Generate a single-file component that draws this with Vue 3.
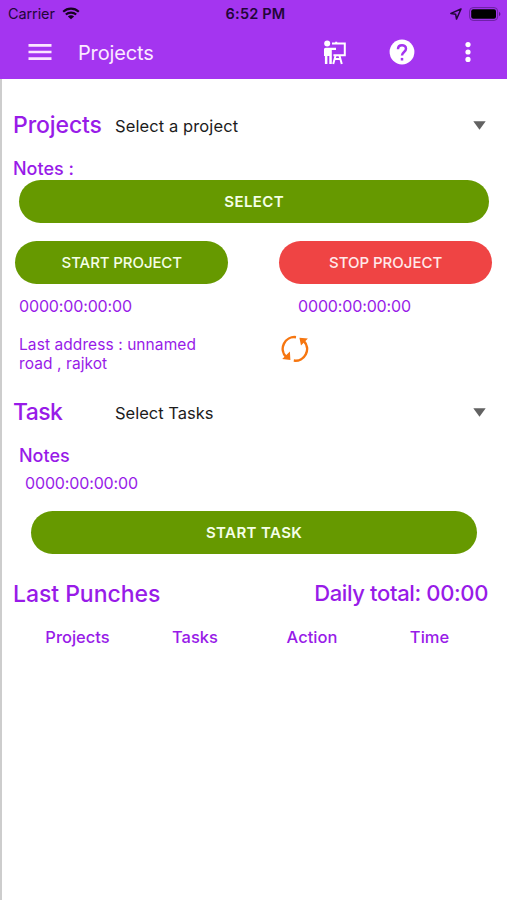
<script setup>
const columns = ['Projects', 'Tasks', 'Action', 'Time']
</script>

<template>
  <div class="screen">
    <header class="header">
      <div class="status">
        <div class="status-left">
          <span class="carrier">Carrier</span>
          <svg class="wifi" viewBox="0 0 18 12">
            <path d="M1.2 4.3C5.6.1 12.4.1 16.8 4.3" />
            <path d="M3.8 7.1c2.9-2.7 7.5-2.7 10.4 0" />
            <path class="solid" d="M9 11.8 5.9 8.9c1.8-1.5 4.4-1.5 6.2 0z" />
          </svg>
        </div>
        <span class="clock">6:52 PM</span>
        <div class="status-right">
          <svg class="location" viewBox="0 0 12 12"><path d="M11 1 .9 5.4l4.8.9.8 4.8z" /></svg>
          <svg class="battery" viewBox="0 0 32 14">
            <rect class="shell" x=".6" y=".6" width="28" height="12.8" rx="3.5" />
            <rect class="charge" x="2.2" y="2.2" width="24.8" height="9.6" rx="2" />
            <path class="tip" d="M30 4.8c1.9.8 1.9 3.6 0 4.4z" />
          </svg>
        </div>
      </div>
      <nav class="nav">
        <svg class="menu" viewBox="0 0 24 18"><path d="M.5 2.3h23M.5 9h23M.5 15.7h23" /></svg>
        <h1 class="title">Projects</h1>
        <svg class="trainer" viewBox="0 0 24 25">
          <circle cx="4.2" cy="3.6" r="3" />
          <path d="M2.8 7.8h10.2v2.2H8.8v14.1H6.3v-8H4.4v8H1.9v-8H1V9.6c0-1.1.7-1.8 1.8-1.8z" />
          <path class="line" d="M9 3.6h12.8v11.6H10.4M13.2 3.6V1.8M12.6 15.5l-2.4 8.4M16.4 15.5l2.4 8.4M12 18.9h5.2" />
        </svg>
        <svg class="help" viewBox="0 0 26 26">
          <circle cx="13" cy="13" r="12.4" />
          <path d="M9 10.2c0-5.4 8-5.1 8-.5 0 3.2-4 3.3-4 6.8" />
          <path d="M13 18.9v2.6" />
        </svg>
        <svg class="more" viewBox="0 0 6 22">
          <circle cx="3" cy="3.6" r="2.6" /><circle cx="3" cy="11" r="2.6" /><circle cx="3" cy="18.4" r="2.6" />
        </svg>
      </nav>
    </header>

    <main class="content">
      <div class="picker">
        <h2 class="heading projects">Projects</h2>
        <span class="choice project-choice">Select a project</span>
        <svg class="caret" viewBox="0 0 13 9"><path d="M.3.2h12.4L6.5 8.8z" /></svg>
      </div>
      <div class="notes project-notes">Notes :</div>
      <button class="button select">SELECT</button>
      <div class="actions">
        <button class="button start">START PROJECT</button>
        <button class="button stop">STOP PROJECT</button>
      </div>
      <div class="timers">
        <span class="timer">0000:00:00:00</span>
        <span class="timer">0000:00:00:00</span>
      </div>
      <div class="location-row">
        <p class="address">Last address : unnamed<br>road , rajkot</p>
        <svg class="refresh" viewBox="0 0 28 28">
          <path class="arc" d="M15 2.2A11.7 11.7 0 0 0 5.3 22.2M12.8 25.6A11.7 11.7 0 0 0 22.7 5.8" />
          <path d="M1.2 24 8.9 16.5 9.4 25zM18.4 2.8l8.5.8-6.9 7z" />
        </svg>
      </div>

      <div class="picker task-picker">
        <h2 class="heading task">Task</h2>
        <span class="choice task-choice">Select Tasks</span>
        <svg class="caret" viewBox="0 0 13 9"><path d="M.3.2h12.4L6.5 8.8z" /></svg>
      </div>
      <div class="notes task-notes">Notes</div>
      <span class="timer task-timer">0000:00:00:00</span>
      <button class="button start-task">START TASK</button>

      <div class="summary">
        <h2 class="heading punches">Last Punches</h2>
        <span class="heading total">Daily total: 00:00</span>
      </div>
      <div class="columns">
        <span v-for="column in columns" :key="column">{{ column }}</span>
      </div>
    </main>
  </div>
</template>

<style>
body { margin: 0; background: #fff; }
</style>

<style scoped>
.screen {
  box-sizing: border-box;
  width: 507px;
  height: 900px;
  overflow: hidden;
  display: flex;
  flex-direction: column;
  background: #fff;
  color: #981be8;
  font-family: Inter, sans-serif;
  white-space: nowrap;
}
.screen * { box-sizing: border-box; }
h1, h2, p { margin: 0; }
svg { display: block; flex: none; }
.header { height: 79px; flex: none; background: #a435f0; }
.status {
  display: grid;
  grid-template-columns: 1fr auto 1fr;
  align-items: center;
  height: 27px;
  padding: 0 6px 0 8px;
  color: #220638;
}
.status-left, .status-right { display: flex; align-items: center; }
.status-right { justify-content: flex-end; gap: 7px; }
.carrier { font-size: 14.5px; line-height: 27px; letter-spacing: -.1px; }
.wifi { width: 18px; height: 13px; margin-left: 7px; fill: none; stroke: #16031f; stroke-width: 2.1; }
.wifi .solid { fill: #16031f; stroke: none; }
.clock { padding-left: 2px; font-size: 14.5px; font-weight: 600; line-height: 27px; letter-spacing: .2px; }
.location { width: 12px; height: 12px; fill: none; stroke: #220638; stroke-width: 1.5; stroke-linejoin: round; }
.battery { width: 32px; height: 14px; }
.shell { fill: none; stroke: #6a20a0; stroke-width: 1; }
.charge { fill: #000; }
.tip { fill: #5b168c; }
.nav { display: flex; align-items: center; height: 50px; padding-left: 28px; color: #fbeaff; }
.menu { width: 24px; height: 18px; fill: none; stroke: #fbe6ff; stroke-width: 2.7; }
.title { width: 245px; margin-left: 26px; padding-top: 1px; font-size: 20px; line-height: 28px; font-weight: 400; letter-spacing: -.15px; }
.trainer { width: 24px; height: 25px; fill: #fff; }
.trainer .line { fill: none; stroke: #fff; stroke-width: 2; }
.help { width: 26px; height: 26px; margin-left: 42px; fill: #fff; }
.help path { fill: none; stroke: #a435f0; stroke-width: 2.5; }
.more { width: 6px; height: 22px; margin-left: 50px; fill: #fff; }
.content { flex: 1; padding: 31px 15px 0 11px; border-left: 2px solid #cdcdcd; }
.picker { display: flex; align-items: center; height: 30px; padding-right: 6px; }
.heading { font-size: 23px; line-height: 30px; font-weight: 500; }
.picker .heading { width: 102px; letter-spacing: -.1px; }
.picker .task { letter-spacing: -.6px; }
.choice { flex: 1; color: #1c1c1c; font-size: 16.5px; line-height: 24px; padding-top: 1px; }
.project-choice { letter-spacing: .1px; }
.caret { width: 13px; height: 9px; margin-top: 1px; fill: #626262; }
.notes { height: 24px; font-size: 18px; line-height: 24px; font-weight: 500; }
.project-notes { margin-top: 17px; }
.button {
  display: block;
  height: 43px;
  padding: 0;
  border: 0;
  border-radius: 22px;
  background: #669900;
  color: #f5ffe7;
  font: 500 15px/43px Inter, sans-serif;
}
.select { width: 469.5px; margin: -.6px 0 0 6.4px; font-weight: 600; letter-spacing: .4px; }
.actions { display: flex; gap: 51px; margin: 18px 0 0 2.4px; }
.actions .button { width: 213px; letter-spacing: -.1px; }
.actions .stop { background: #ef4444; color: #ffeaea; letter-spacing: -.02px; }
.timers { display: flex; height: 24px; margin: 9.6px 0 0 6px; }
.timers .timer { width: 279px; flex: none; }
.timer { display: block; font-size: 16px; line-height: 24px; letter-spacing: -.14px; }
.location-row { display: flex; height: 38px; margin: 17px 0 0 6px; }
.address { width: 262px; font-size: 15.5px; line-height: 19px; letter-spacing: .08px; }
.refresh { width: 28px; height: 28px; fill: #f67610; }
.refresh .arc { fill: none; stroke: #f67610; stroke-width: 2.5; }
.task-picker { margin-top: 24px; }
.task-notes { margin: 17px 0 0 6px; }
.task-timer { margin: 3px 0 0 12px; }
.start-task { width: 445.5px; margin: 15.6px 0 0 18.4px; font-weight: 600; letter-spacing: .4px; }
.summary { display: flex; justify-content: space-between; height: 30px; margin-top: 25px; padding-right: 4px; }
.punches { letter-spacing: -.05px; }
.total { font-size: 22px; line-height: 29px; letter-spacing: -.36px; }
.columns {
  display: grid;
  grid-template-columns: 119px 116px 118px 117px;
  margin: 16px 0 0 5px;
  font-size: 16.5px;
  line-height: 24px;
  font-weight: 500;
  text-align: center;
}
</style>
